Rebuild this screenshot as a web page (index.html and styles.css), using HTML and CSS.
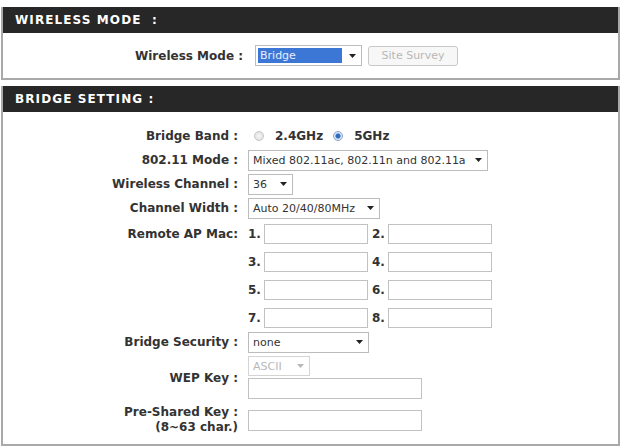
FILE: index.html
```html
<!DOCTYPE html>
<html>
<head>
<meta charset="utf-8">
<link rel="stylesheet" href="styles.css">
</head>
<body>
<div class="page">
  <section class="box box-mode">
    <h2 class="box-head">WIRELESS MODE&nbsp; :</h2>
    <div class="mode-body">
      <span class="lbl lbl-mode">Wireless Mode :</span>
      <div class="select sel-mode">
        <span class="hilite">Bridge</span>
        <svg class="arrow" viewBox="0 0 7 4"><path d="M0 0H7L3.5 4Z"/></svg>
      </div>
      <button class="btn" disabled>Site Survey</button>
    </div>
  </section>

  <section class="box box-bridge">
    <h2 class="box-head">BRIDGE SETTING :</h2>
    <div class="form">
      <div class="row">
        <span class="lbl">Bridge Band :</span>
        <span class="radio"></span><span class="opt">2.4GHz</span>
        <span class="radio on"></span><span class="opt">5GHz</span>
      </div>
      <div class="row">
        <span class="lbl">802.11 Mode :</span>
        <div class="select sel-80211"><span>Mixed 802.11ac, 802.11n and 802.11a</span><svg class="arrow" viewBox="0 0 7 4"><path d="M0 0H7L3.5 4Z"/></svg></div>
      </div>
      <div class="row">
        <span class="lbl">Wireless Channel :</span>
        <div class="select sel-chan"><span>36</span><svg class="arrow" viewBox="0 0 7 4"><path d="M0 0H7L3.5 4Z"/></svg></div>
      </div>
      <div class="row">
        <span class="lbl">Channel Width :</span>
        <div class="select sel-width"><span>Auto 20/40/80MHz</span><svg class="arrow" viewBox="0 0 7 4"><path d="M0 0H7L3.5 4Z"/></svg></div>
      </div>
      <div class="row row-mac">
        <span class="lbl">Remote AP Mac:</span>
        <span class="num">1.</span><input class="mac" type="text">
        <span class="num num2">2.</span><input class="mac" type="text">
      </div>
      <div class="row row-mac">
        <span class="lbl"></span>
        <span class="num">3.</span><input class="mac" type="text">
        <span class="num num2">4.</span><input class="mac" type="text">
      </div>
      <div class="row row-mac">
        <span class="lbl"></span>
        <span class="num">5.</span><input class="mac" type="text">
        <span class="num num2">6.</span><input class="mac" type="text">
      </div>
      <div class="row row-mac">
        <span class="lbl"></span>
        <span class="num">7.</span><input class="mac" type="text">
        <span class="num num2">8.</span><input class="mac" type="text">
      </div>
      <div class="row row-sec">
        <span class="lbl">Bridge Security :</span>
        <div class="select sel-sec"><span>none</span><svg class="arrow" viewBox="0 0 7 4"><path d="M0 0H7L3.5 4Z"/></svg></div>
      </div>
      <div class="row row-wep">
        <span class="lbl">WEP Key :</span>
        <div class="stack">
          <div class="select sel-ascii disabled"><span>ASCII</span><svg class="arrow" viewBox="0 0 7 4"><path d="M0 0H7L3.5 4Z"/></svg></div>
          <input class="key" type="text">
        </div>
      </div>
      <div class="row row-psk">
        <span class="lbl lbl-two">Pre-Shared Key :<br>(8~63 char.)</span>
        <input class="key" type="text">
      </div>
    </div>
  </section>
</div>
</body>
</html>
```

FILE: styles.css
```css
body {
  margin: 0;
  background: #fff;
  font-family: "DejaVu Sans", Verdana, sans-serif;
  color: #333;
}

.page {
  padding: 7px 0 0 1px;
}

.box {
  width: 619px;
  box-sizing: border-box;
  border: 2px solid #a9a9a9;
  border-top: none;
  background: #fff;
}

.box-bridge {
  margin-top: 6px;
}

.box-head {
  margin: 0;
  height: 26px;
  line-height: 26px;
  background: #272727;
  color: #fff;
  font-size: 12px;
  font-weight: bold;
  letter-spacing: 1.1px;
  padding-left: 12px;
}

.mode-body {
  height: 45px;
  display: flex;
  align-items: center;
}

.lbl {
  flex: none;
  width: 235px;
  margin-right: 10px;
  text-align: right;
  font-size: 12px;
  font-weight: bold;
  color: #333;
  white-space: nowrap;
}

.lbl-mode {
  width: 240px;
  margin-right: 12px;
}

.lbl-two {
  line-height: 15px;
}

.select {
  display: flex;
  align-items: center;
  justify-content: space-between;
  box-sizing: border-box;
  height: 21px;
  border: 1px solid #bcbcbc;
  background: #fff;
  padding: 0 5px 0 4px;
  font-size: 11px;
  color: #333;
  white-space: nowrap;
}

.arrow {
  flex: none;
  width: 7px;
  height: 4px;
  fill: #222;
}

.sel-mode {
  width: 107px;
  padding: 2px 5px 2px 2px;
}

.hilite {
  flex: 1;
  height: 100%;
  margin-right: 7px;
  background: #3c77d6;
  color: #e8eefa;
  padding-left: 2px;
  line-height: 15px;
}

.btn {
  margin-left: 6px;
  width: 90px;
  height: 20px;
  box-sizing: border-box;
  border: 1px solid #c9c9c9;
  border-radius: 3px;
  background: #f7f7f7;
  color: #b8b8b8;
  font-family: "DejaVu Sans", Verdana, sans-serif;
  font-size: 11px;
  padding: 0;
}

.form {
  display: flex;
  flex-direction: column;
  padding: 12px 0 9px;
}

.row {
  display: flex;
  align-items: center;
  height: 24px;
}

.row-mac {
  height: 28px;
}

.row-sec {
  height: 20px;
}

.row-wep {
  height: auto;
  margin-top: 4px;
}

.row-psk {
  height: 30px;
  margin-top: 6px;
}

.radio {
  flex: none;
  width: 10px;
  height: 10px;
  box-sizing: border-box;
  border-radius: 50%;
  border: 1px solid #c6c6c6;
  background: radial-gradient(circle, #f6f6f6 0, #dcdcdc 100%);
  margin-left: 6px;
}

.radio.on {
  border-color: #8ea6c6;
  background: radial-gradient(circle, #2d6cc0 0, #2d6cc0 2px, #d6e3f3 3px);
  margin-left: 10px;
}

.opt {
  margin-left: 11px;
  font-size: 12px;
  font-weight: bold;
  color: #333;
}

.sel-80211 { width: 240px; }
.sel-chan { width: 45px; }
.sel-width { width: 132px; }
.sel-sec { width: 121px; }
.sel-ascii { width: 62px; height: 20px; }

.select.disabled {
  border-color: #d4d4d4;
  color: #b8b8b8;
}

.select.disabled .arrow {
  fill: #b8b8b8;
}

.num {
  flex: none;
  width: 16px;
  font-size: 12px;
  font-weight: bold;
  color: #333;
}

.num2 {
  margin-left: 4px;
}

input {
  box-sizing: border-box;
  margin: 0;
  border: 1px solid #c2c2c2;
  background: #fff;
  padding: 0;
}

.mac {
  width: 104px;
  height: 20px;
}

.stack {
  display: flex;
  flex-direction: column;
  gap: 2px;
}

.key {
  width: 174px;
  height: 21px;
}
```
